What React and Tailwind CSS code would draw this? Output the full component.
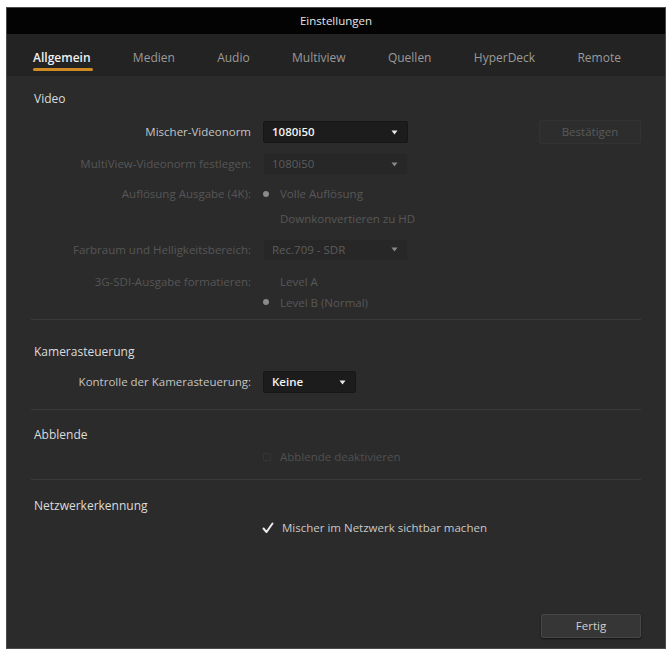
import React from "react";

const tabs = ["Allgemein", "Medien", "Audio", "Multiview", "Quellen", "HyperDeck", "Remote"];

function Caret({ dim }) {
    return (
        <svg width="7" height="5" viewBox="0 0 7 5" className={dim ? "opacity-50" : ""}>
            <path d="M0.5 0.5 L6.5 0.5 L3.5 4.5 Z" fill="#e8e8e8" />
        </svg>
    );
}

function Dropdown({ value, width, dim }) {
    return (
        <div
            className={`h-[22px] ${width} flex items-center justify-between pl-[8px] pr-[9px] rounded-[2px] border ${
                dim ? "bg-[#272727] border-[#2a2a2a] text-[#5c5c5c]" : "bg-[#1c1c1c] border-[#171717] text-[#f2f2f2] font-semibold"
            }`}
        >
            <span>{value}</span>
            <Caret dim={dim} />
        </div>
    );
}

function Row({ label, dim, children, className = "" }) {
    return (
        <div className={`grid grid-cols-[244px_1fr] items-center gap-[12px] ${className}`}>
            <div className={`text-right ${dim ? "text-[#565656]" : "text-[#c4c4c4]"}`}>{label}</div>
            <div className="flex items-center">{children}</div>
        </div>
    );
}

function Radio({ on, label }) {
    return (
        <div className="flex items-center gap-[9px] text-[#585858]">
            <span className="w-[6px] h-[6px] flex items-center justify-center">
                {on ? <span className="w-[6px] h-[6px] rounded-full bg-[#8a8a8a]"></span> : null}
            </span>
            <span className="ml-[2px]">{label}</span>
        </div>
    );
}

function Separator() {
    return <div className="mx-[24px] h-px bg-[#3a3a3a]"></div>;
}

export default function App() {
    return (
        <div className="w-[671px] h-[654px] bg-white pl-[6px] pt-[7px]" style={{ fontFamily: "'Open Sans', 'Noto Sans', sans-serif" }}>
            <div className="w-[660px] h-[642px] flex flex-col bg-[#2b2b2b] border border-[#4a4a4a] text-[11.5px]">
                {/* Title */}
                <div className="h-[26px] bg-[#030303] flex items-center justify-center text-[#e6e6e6] text-[11.5px]">
                    Einstellungen
                </div>

                {/* Tabs */}
                <div className="h-[42px] bg-[#232323] flex items-center justify-between pt-[6px] pl-[26px] pr-[44px] text-[#9a9a9a] text-[12px]">
                    {tabs.map((t, i) => (
                        <div key={t} className="relative">
                            <span className={i === 0 ? "text-[#f0f0f0] font-semibold" : ""}>{t}</span>
                            {i === 0 && (
                                <div className="absolute left-0 right-[-2px] top-[19px] h-[3px] rounded-full bg-[#d08a24]"></div>
                            )}
                        </div>
                    ))}
                </div>

                {/* Video */}
                <div className="pl-[27px] pt-[14px] text-[#dcdcdc] text-[12px] h-[30px]">Video</div>
                <div className="flex items-center">
                    <Row label="Mischer-Videonorm" className="mt-[15px] flex-1">
                        <Dropdown value="1080i50" width="w-[145px]" />
                    </Row>
                </div>
                <div className="relative">
                    <div className="absolute right-[24px] top-[-23px] w-[102px] h-[24px] border border-[#333] bg-[#2d2d2d] rounded-[2px] flex items-center justify-center text-[#5a5a5a]">
                        Bestätigen
                    </div>
                </div>
                <Row label="MultiView-Videonorm festlegen:" dim className="mt-[10px]">
                    <Dropdown value="1080i50" width="w-[145px]" dim />
                </Row>
                <Row label="Auflösung Ausgabe (4K):" dim className="mt-[10px]">
                    <Radio on label="Volle Auflösung" />
                </Row>
                <Row label="" dim className="mt-[8px]">
                    <Radio label="Downkonvertieren zu HD" />
                </Row>
                <Row label="Farbraum und Helligkeitsbereich:" dim className="mt-[11px]">
                    <Dropdown value="Rec.709 - SDR" width="w-[145px]" dim />
                </Row>
                <Row label="3G-SDI-Ausgabe formatieren:" dim className="mt-[12px]">
                    <Radio label="Level A" />
                </Row>
                <Row label="" dim className="mt-[4px]">
                    <Radio on label="Level B (Normal)" />
                </Row>
                <div className="mt-[8px]">
                    <Separator />
                </div>

                {/* Kamerasteuerung */}
                <div className="pl-[27px] pt-[23px] text-[#dcdcdc] text-[12px]">Kamerasteuerung</div>
                <Row label="Kontrolle der Kamerasteuerung:" className="mt-[10px]">
                    <Dropdown value="Keine" width="w-[93px]" />
                </Row>
                <div className="mt-[16px]">
                    <Separator />
                </div>

                {/* Abblende */}
                <div className="pl-[27px] pt-[16px] text-[#dcdcdc] text-[12px]">Abblende</div>
                <Row label="" className="mt-[4px]">
                    <div className="flex items-center gap-[9px] text-[#505050]">
                        <span className="w-[8px] h-[8px] border border-[#343434] rounded-[1px]"></span>
                        <span>Abblende deaktivieren</span>
                    </div>
                </Row>
                <div className="mt-[14px]">
                    <Separator />
                </div>

                {/* Netzwerkerkennung */}
                <div className="pl-[27px] pt-[17px] text-[#dcdcdc] text-[12px]">Netzwerkerkennung</div>
                <Row label="" className="mt-[4px]">
                    <div className="flex items-center gap-[8px] text-[#c8c8c8] -ml-[1px]">
                        <svg width="12" height="12" viewBox="0 0 12 12">
                            <path d="M1.5 6.5 L4.5 10 L10.5 1.5" fill="none" stroke="#ececec" strokeWidth="2" strokeLinecap="round" strokeLinejoin="round" />
                        </svg>
                        <span>Mischer im Netzwerk sichtbar machen</span>
                    </div>
                </Row>

                {/* Footer */}
                <div className="flex-1 flex items-end justify-end pr-[24px] pb-[10px]">
                    <div className="w-[100px] h-[24px] bg-[#363636] border border-[#474747] rounded-[2px] shadow-[0_1px_2px_rgba(0,0,0,0.6)] flex items-center justify-center text-[#d0d0d0]">
                        Fertig
                    </div>
                </div>
            </div>
        </div>
    );
}
